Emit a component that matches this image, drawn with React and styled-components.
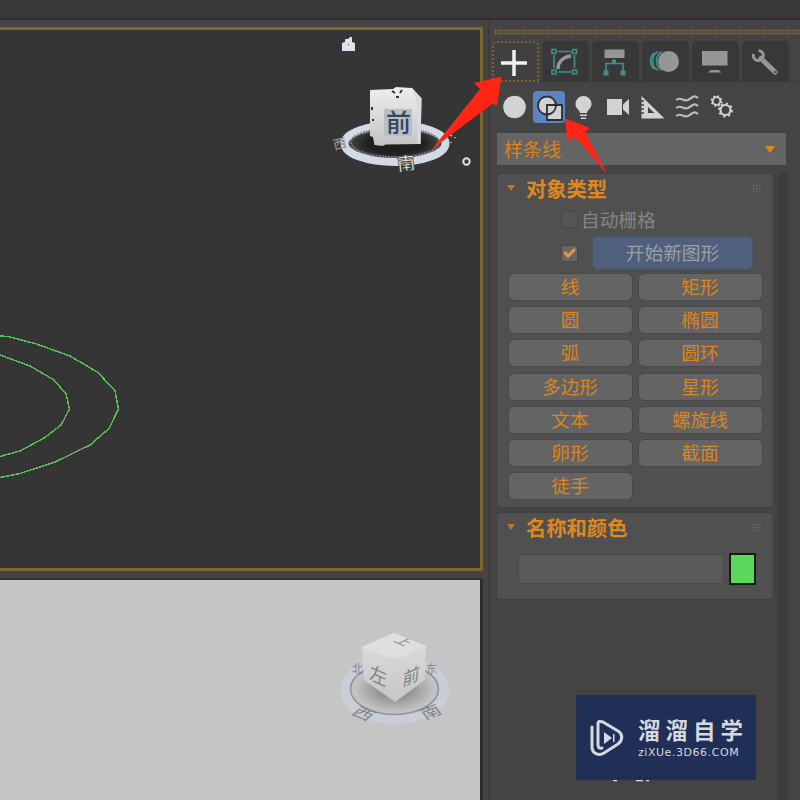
import { createGlobalStyle, styled } from "styled-components";

const GlobalStyle = createGlobalStyle`
  * {
    box-sizing: border-box;
  }
  body {
    margin: 0;
    background: #444444;
    font-family: "Noto Sans CJK SC", "Liberation Sans", sans-serif;
  }
  button {
    font-family: inherit;
  }
  svg {
    display: block;
  }
`;

const Screen = styled.div`
  position: relative;
  width: 800px;
  height: 800px;
  display: flex;
  flex-direction: column;
  overflow: hidden;
  background: #444444;
`;

const TopBar = styled.header`
  flex: none;
  height: 20px;
  background: #393939;
  border-bottom: 2px solid #2f2f2f;
`;

const Workspace = styled.main`
  flex: 1;
  min-height: 0;
  display: flex;
`;

const Viewports = styled.section`
  flex: none;
  width: 484px;
  padding-top: 7px;
  display: flex;
  flex-direction: column;
  gap: 7px;
`;

const ActiveViewport = styled.div`
  height: 544px;
  width: 483px;
  background: #353535;
  border: 3px solid #7b682c;
  border-left: none;
`;

const ShadedViewport = styled.div`
  flex: 1;
  width: 483px;
  background: #c5c5c5;
  border-top: 2px solid #2e2e2e;
  border-right: 3px solid #2e2e2e;
`;

const Panel = styled.aside`
  flex: 1;
  margin-left: 4px;
  padding: 9px 0 0 2px;
  border-left: 2px solid #3d3d3d;
`;

const Grip = styled.div`
  height: 6px;
  margin-left: 2px;
  background-color: #4b463e;
  background-image: radial-gradient(#8a6a40 0.8px, transparent 1.2px);
  background-size: 3px 3px;
`;

const Tabs = styled.nav`
  display: flex;
  gap: 3px;
  height: 41px;
  margin-top: 6px;
  border-bottom: 1px solid #3c3c3c;
`;

const Tab = styled.button`
  width: 47px;
  height: 41px;
  padding: 0 3px 2px 0;
  display: grid;
  place-items: center;
  border: ${({ $active }) => ($active ? "2px dotted #80602f" : "none")};
  border-radius: 5px 5px 0 0;
  background: ${({ $active }) => ($active ? "#404040" : "#383838")};
`;

const Categories = styled.div`
  display: flex;
  gap: 3px;
  margin: 9px 0 0 6px;
`;

const Category = styled.button`
  width: 32px;
  height: 32px;
  padding: 0;
  display: grid;
  place-items: center;
  border: none;
  border-radius: 4px;
  background: ${({ $active }) => ($active ? "#5b85c2" : "transparent")};
`;

const Select = styled.div`
  display: flex;
  align-items: center;
  justify-content: space-between;
  width: 289px;
  height: 32px;
  margin: 10px 0 0 5px;
  padding: 0 11px 0 7px;
  background: #646464;
  color: #d9831f;
  font-size: 19px;
  line-height: 30px;
`;

const Caret = styled.span`
  width: 0;
  height: 0;
  border: ${({ $size }) => $size}px solid transparent;
  border-top: ${({ $size }) => $size + 2}px solid ${({ $color }) => $color};
  border-bottom: none;
`;

const Scroller = styled.div`
  display: flex;
  height: 627px;
  margin: 8px 0 0 5px;
  gap: 5px;
`;

const Rollouts = styled.div`
  width: 276px;
  padding-top: 1px;
  display: flex;
  flex-direction: column;
  gap: 6px;
`;

const Track = styled.div`
  width: 10px;
  border-radius: 5px 5px 0 0;
  background: #3c3c3c;
`;

const Rollout = styled.section`
  height: ${({ $height }) => $height}px;
  padding: 0 10px 0 12px;
  border-radius: 4px;
  background: #505050;
  box-shadow: 0 0 0 1px #404040;
`;

const RolloutHeader = styled.header`
  display: flex;
  align-items: center;
  height: 28px;
  gap: 11px;
  margin-left: -2px;
`;

const Title = styled.h2`
  flex: 1;
  margin: 0;
  color: #e0881f;
  font-size: 20.3px;
  line-height: 28px;
  font-weight: 700;
`;

const Dots = styled.span`
  width: 9px;
  height: 9px;
  margin-right: 2px;
  background-image: radial-gradient(#80613f 0.8px, transparent 1.1px);
  background-size: 3px 3px;
`;

const OptionRow = styled.label`
  display: flex;
  align-items: center;
  height: ${({ $height }) => $height}px;
  padding-left: 52px;
  gap: ${({ $gap }) => $gap}px;
  color: #858585;
  font-size: 18.7px;
  line-height: 30px;
`;

const Checkbox = styled.span`
  flex: none;
  width: 17px;
  height: 17px;
  display: grid;
  place-items: center;
  border: 1px solid #474747;
  background: ${({ $checked }) => ($checked ? "#666666" : "#555555")};
`;

const StartShape = styled.button`
  width: 161px;
  height: 34px;
  padding: 0 0 2px;
  border: 1px solid #485365;
  border-radius: 5px;
  background: #4f5f7c;
  color: #9b9fa7;
  font-size: 18.7px;
  line-height: 30px;
`;

const ButtonGrid = styled.div`
  display: grid;
  grid-template-columns: 123px 123px;
  grid-auto-rows: 26px;
  gap: 7.2px 7px;
  margin-top: 4px;
`;

const ShapeButton = styled.button`
  padding: 0 1px 3px 0;
  border: none;
  border-radius: 5px;
  background: #646464;
  box-shadow: 0 0 0 1px #494949;
  color: #dc851f;
  font-size: 18.7px;
  line-height: 23px;
`;

const NameRow = styled.div`
  display: flex;
  gap: 5px;
  margin: 13px 0 0 9px;
`;

const NameField = styled.div`
  width: 206px;
  height: 30px;
  border: 1px solid #4a4a4a;
  background: #595959;
`;

const Swatch = styled.div`
  width: 27px;
  height: 32px;
  margin-top: -1px;
  border: 2px solid #111d11;
  background: #5bd85b;
`;

const Arrows = styled.svg`
  position: absolute;
  inset: 0;
  pointer-events: none;
`;

const Watermark = styled.div`
  position: absolute;
  left: 576px;
  top: 695px;
  width: 180px;
  height: 85px;
  display: flex;
  align-items: center;
  gap: 12px;
  padding-left: 14px;
  background: #202f56;
  color: #d5d8de;
`;

const Brand = styled.div`
  margin-top: -5px;
  font-size: 22.5px;
  line-height: 34px;
  font-weight: 700;
  letter-spacing: 5px;
  white-space: nowrap;
`;

const Site = styled.div`
  font-family: "DejaVu Sans", sans-serif;
  font-size: 11px;
  line-height: 13px;
  letter-spacing: 0.55px;
  white-space: nowrap;
`;

const teal = "#3f8f8a";
const gray = "#969696";
const light = "#d3d3d3";

const tabIcons = [
  {
    name: "create",
    icon: <path d='M20 7v26M7 20h26' stroke='#f0f0f0' strokeWidth='3.5' />,
  },
  {
    name: "modify",
    icon: (
      <g fill='none' stroke={teal} strokeWidth='1.7'>
        <path d='M14 10.5h13M14 31h13M10 14v13M30.5 14v13' />
        <path d='M8 8.5h4v4h-4zM28.5 8.5h4v4h-4zM8 29h4v4h-4zM28.5 29h4v4h-4z' />
        <path d='M14 28C14 21 19 16 27 15' stroke={gray} strokeWidth='3.5' />
      </g>
    ),
  },
  {
    name: "hierarchy",
    icon: (
      <g>
        <path d='M10.5 8.5h20v8.5h-20z' fill={gray} />
        <path d='M20 18v5M12 30v-7.5h17V30' fill='none' stroke={teal} strokeWidth='1.7' />
        <path d='M9.5 29.5h5v5h-5zM26.5 29.5h5v5h-5zM18 19h4v3h-4z' fill={teal} />
      </g>
    ),
  },
  {
    name: "motion",
    icon: (
      <g fill='none' stroke={teal} strokeWidth='1.7'>
        <path d='M14 10.5a11 11 0 0 0 0 19' />
        <path d='M18 10.5a11 11 0 0 0 0 19' />
        <path d='M10.5 12a10 10 0 0 0 0 16' />
        <circle cx='24.5' cy='20.5' r='10.5' fill={gray} stroke='none' />
      </g>
    ),
  },
  {
    name: "display",
    icon: (
      <path d='M8 10h25.5v14.5H8zM17 29h7.500l3 2.5h-13.500z' fill={gray} />
    ),
  },
  {
    name: "utilities",
    icon: (
      <g fill='none' stroke={gray} strokeLinecap='round'>
        <path d='M17 17.5L31 31' strokeWidth='5' />
        <path d='M9.500 13A5 5 0 1 0 14.500 9.500' strokeWidth='3' strokeLinecap='butt' />
        <circle cx='31' cy='31' r='.8' stroke='#444444' strokeWidth='1' />
      </g>
    ),
  },
];

const categoryIcons = [
  { name: "geometry", icon: <circle cx='16.5' cy='16' r='11.3' fill={light} /> },
  {
    name: "shapes",
    icon: (
      <g stroke='#292f38' strokeWidth='1.8'>
        <circle cx='14' cy='14.5' r='9' fill={light} />
        <path d='M14 14h15v15H14z' fill={light} />
        <path d='M14 23.5A9 9 0 0 0 23 14.5' fill='none' />
      </g>
    ),
  },
  {
    name: "lights",
    icon: (
      <g fill={light}>
        <path d='M15.5 5a8 8 0 0 1 8 8c0 5-4.5 6-4.5 9h-7C12 19 7.5 18 7.5 13a8 8 0 0 1 8-8z' />
        <path d='M12 23.5h7v1.5h-7zM13 26.5h5v1.5h-5z' />
      </g>
    ),
  },
  {
    name: "cameras",
    icon: <path d='M4 8h15v16H4zM20 13.5l6-5.5v16l-6-5.5z' fill={light} />,
  },
  {
    name: "helpers",
    icon: (
      <g>
        <path d='M3.5 5L26.5 27.500H3.5z M10 16v6h6.5z' fill={light} fillRule='evenodd' />
        <path d='M3 10h3M3 14h3M3 18h3M3 22h3' stroke='#444444' strokeWidth='1.3' />
      </g>
    ),
  },
  {
    name: "space warps",
    icon: (
      <g fill='none' stroke='#bcbcbc' strokeWidth='2.2'>
        <path d='M3 9C8 5 10 11 15 9s5-6 10-2' />
        <path d='M3 17c5-4 7 2 12 0s5-6 10-2' />
        <path d='M3 25c5-4 7 2 12 0s5-6 10-2' />
      </g>
    ),
  },
  {
    name: "systems",
    icon: (
      <g fill='none' stroke={light}>
        <circle cx='8.5' cy='10' r='3.8' strokeWidth='1.8' />
        <circle cx='8.5' cy='10' r='5' strokeWidth='1.6' strokeDasharray='2 1.927' />
        <circle cx='17.5' cy='19' r='5' strokeWidth='2.2' />
        <circle cx='17.5' cy='19' r='6.6' strokeWidth='1.8' strokeDasharray='2.4 2.784' />
      </g>
    ),
  },
];

const shapes = [
  "线",
  "矩形",
  "圆",
  "椭圆",
  "弧",
  "圆环",
  "多边形",
  "星形",
  "文本",
  "螺旋线",
  "卵形",
  "截面",
  "徒手",
];

const FrontScene = () => (
  <svg width='480' height='538' viewBox='0 30 480 538'>
    <defs>
      <linearGradient id='face' x2='0' y2='1'>
        <stop offset='0' stopColor='#eeeeec' />
        <stop offset='1' stopColor='#c4c4c4' />
      </linearGradient>
      <radialGradient id='well'>
        <stop offset='.55' stopColor='#202020' />
        <stop offset='1' stopColor='#4b4b4b' />
      </radialGradient>
    </defs>
    <g fill='none' stroke='#58bd58' strokeWidth='1.5' shapeRendering='crispEdges'>
      <path d='M0 336L8 336.5 35 343.5 70 356 98 372.5 115 391 118.500 409 109 428.5 90 445 55 462 20 473.5 0 477.5' />
      <path d='M0 355L30 366 54 380 66 394 69.5 409 61 425 45 437.5 20 451 0 456.5' />
    </g>
    <path d='M342 43l3-1v-3h3l2-2h2v5l3 1v8h-13z' fill='#dde4ee' />
    <path d='M347 44h3l-1.5 2z' fill='#8d9bb0' />
    <ellipse cx='395' cy='143.5' rx='50.5' ry='18.500' fill='url(#well)' stroke='#d3dae6' strokeWidth='8' />
    <ellipse cx='395' cy='142.5' rx='44' ry='14.5' fill='none' stroke='#777777' strokeWidth='2' strokeDasharray='2 1' />
    <path d='M370 90l23-1 3-2 16 1 9.5 10-1 46-35 .5-3 1.5-8-1-1.5-8-3-1z' fill='url(#face)' />
    <path d='M412 88l9.5 11-1 45h-3l-1-43z' fill='#dadada' />
    <path d='M392 91l3 2M402 90l-2 3M396 97h3M372 107v3M373 119v2' stroke='#333333' strokeWidth='2' />
    <path d='M384 109h28v27h-28z' fill='#b5becb' />
    <g fontFamily='Noto Sans CJK SC, sans-serif'>
      <text x='386' y='132' fontSize='25' fontWeight='500' fill='#3c4450'>前</text>
      <text x='398' y='171' fontSize='18' fontWeight='700' fill='#e1e1e1' stroke='#333333' strokeWidth='.7' transform='rotate(-7 398 170)'>南</text>
      <text x='334' y='150' fontSize='13' fill='#d5d5d5' stroke='#333333' strokeWidth='.3' transform='rotate(-15 334 148)'>西</text>
    </g>
    <path d='M448 134l4 2M451 142v1M455 137v1' stroke='#c8c8c8' strokeWidth='1.5' />
    <circle cx='466.5' cy='161.5' r='3.2' fill='none' stroke='#dde1e8' strokeWidth='2' />
  </svg>
);

const PerspectiveScene = () => (
  <svg width='480' height='220' viewBox='0 580 480 220'>
    <defs>
      <linearGradient id='side' x2='0' y2='1'>
        <stop offset='0' stopColor='#dedede' />
        <stop offset='1' stopColor='#c6c6c6' />
      </linearGradient>
      <radialGradient id='shade'>
        <stop offset='.2' stopColor='#868686' />
        <stop offset='.9' stopColor='#c2c2c2' />
      </radialGradient>
    </defs>
    <ellipse cx='394.5' cy='690' rx='49.5' ry='29' fill='none' stroke='#c9cdd5' strokeWidth='10' />
    <ellipse cx='394.5' cy='689' rx='44' ry='25.5' fill='url(#shade)' stroke='#92949b' strokeWidth='1.6' />
    <path d='M362 647l32-14 32 13-1 34-30 22-31-22z' fill='url(#side)' />
    <path d='M362 647l32-14 32 13-31 14z' fill='#dfdfdf' />
    <circle cx='394' cy='662' r='5' fill='#d0d5da' />
    <g fontFamily='Noto Sans CJK SC, sans-serif' fill='#80848b'>
      <text fontSize='19' transform='matrix(.9 .4 -.1 1 369 679)'>左</text>
      <text fontSize='19' transform='matrix(.9 -.4 -.1 1 402 687)'>前</text>
      <text fontSize='15' transform='matrix(.8 .35 -.8 .4 393 641)'>上</text>
      <text x='352' y='673' fontSize='11'>北</text>
      <text x='426' y='673' fontSize='11'>东</text>
      <text fontSize='18' transform='matrix(1 .4 -.7 .6 350 714)'>西</text>
      <text fontSize='18' transform='matrix(1 -.4 .5 .7 425 720)'>南</text>
    </g>
  </svg>
);

const RolloutTop = ({ title }) => (
  <RolloutHeader>
    <Caret $size={4.5} $color='#b9762f' />
    <Title>{title}</Title>
    <Dots />
  </RolloutHeader>
);

const CommandPanel = () => (
  <Panel>
    <Grip />
    <Tabs>
      {tabIcons.map(({ name, icon }, i) => (
        <Tab key={name} $active={i === 0} aria-label={name}>
          <svg width='40' height='40' viewBox='0 0 40 40'>
            {icon}
          </svg>
        </Tab>
      ))}
    </Tabs>
    <Categories>
      {categoryIcons.map(({ name, icon }, i) => (
        <Category key={name} $active={i === 1} aria-label={name}>
          <svg width='32' height='32' viewBox='0 0 32 32'>
            {icon}
          </svg>
        </Category>
      ))}
    </Categories>
    <Select>
      样条线
      <Caret $size={5} $color='#e0881f' />
    </Select>
    <Scroller>
      <Rollouts>
        <Rollout $height={333}>
          <RolloutTop title='对象类型' />
          <OptionRow $height={34} $gap={3}>
            <Checkbox />
            自动栅格
          </OptionRow>
          <OptionRow $height={34} $gap={14}>
            <Checkbox $checked>
              <svg width='13' height='12' viewBox='0 0 13 12'>
                <path d='M1.5 5l3.5 4L12 2' fill='none' stroke='#ee9637' strokeWidth='3' />
              </svg>
            </Checkbox>
            <StartShape>开始新图形</StartShape>
          </OptionRow>
          <ButtonGrid>
            {shapes.map((shape) => (
              <ShapeButton key={shape}>{shape}</ShapeButton>
            ))}
          </ButtonGrid>
        </Rollout>
        <Rollout $height={86}>
          <RolloutTop title='名称和颜色' />
          <NameRow>
            <NameField />
            <Swatch />
          </NameRow>
        </Rollout>
      </Rollouts>
      <Track />
    </Scroller>
  </Panel>
);

export default function App() {
  return (
    <Screen>
      <GlobalStyle />
      <TopBar />
      <Workspace>
        <Viewports>
          <ActiveViewport>
            <FrontScene />
          </ActiveViewport>
          <ShadedViewport>
            <PerspectiveScene />
          </ShadedViewport>
        </Viewports>
        <CommandPanel />
      </Workspace>
      <Arrows width='800' height='800' viewBox='0 0 800 800'>
        <g fill='#ff2514'>
          <path d='M501.5 76.5L474 83l6 6-48 60 60-45 5 1z' />
          <path d='M565 118.5l2.5 24 7-6L607 174l-22-42 5-4z' />
        </g>
        <path d='M613 780.500h4M636 780.500h7M646 780.500h3' stroke='#dddddd' strokeWidth='1.5' />
      </Arrows>
      <Watermark>
        <svg width='36' height='38' viewBox='0 0 36 38'>
          <g fill='none' stroke='#d5d8de' strokeWidth='3' strokeLinejoin='round' strokeLinecap='round'>
            <path d='M12 29c-3 1-4-1-4-3V5c0-3 2-3 5-2l15 9c5 3 5 9 0 13L14 34c-5 3-11 1-12-5V8' />
          </g>
          <path d='M14 13l8 6-8 6zM23 15h1.5v8H23z' fill='#d5d8de' />
        </svg>
        <div>
          <Brand>溜溜自学</Brand>
          <Site>ziXUe.3D66.COM</Site>
        </div>
      </Watermark>
    </Screen>
  );
}
